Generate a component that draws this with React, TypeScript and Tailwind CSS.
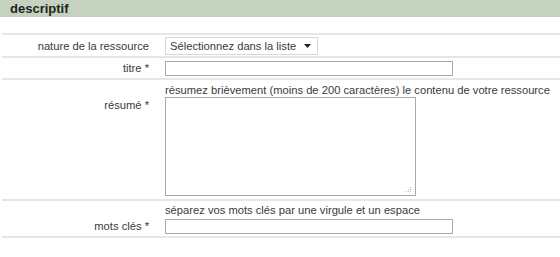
function Row({
  label,
  labelClass,
  children,
  className,
}: {
  label: string;
  labelClass?: string;
  children: React.ReactNode;
  className?: string;
}) {
  return (
    <div className={`flex border-b-2 border-[#e6e6e6] ${className ?? ""}`}>
      <div className={`w-[147px] shrink-0 text-right ${labelClass ?? ""}`}>{label}</div>
      <div className="ml-[16px] flex-1">{children}</div>
    </div>
  );
}

export default function App() {
  return (
    <div className="w-[560px] h-[257px] overflow-hidden bg-white text-[11.2px] leading-[14px] text-[#3a3a3a] whitespace-nowrap font-['Liberation_Sans',Arial,sans-serif]">
      <div className="h-[17px] bg-[#c6d2c0] pl-[10px] pt-[2px] text-[13px] leading-[14px] font-bold text-[#222]">
        descriptif
      </div>
      <div className="ml-[2px]">
        <div className="h-[18px] border-b-2 border-[#e6e6e6]" />
        <Row label="nature de la ressource" className="h-[23px] items-center">
          <div className="flex h-[18px] w-[153px] items-center justify-between border border-[#d8d8d8] bg-white pl-[4px] pr-[6px]">
            <span>Sélectionnez dans la liste</span>
            <svg width="7" height="4" viewBox="0 0 7 4">
              <path d="M0 0h7L3.5 4z" fill="#222" />
            </svg>
          </div>
        </Row>
        <Row label="titre *" className="h-[22px] items-center">
          <div className="h-[15px] w-[288px] border border-[#a9a9a9] bg-white" />
        </Row>
        <Row label="résumé *" labelClass="pt-[15px]" className="h-[121px] pt-[3px]">
          <div>résumez brièvement (moins de 200 caractères) le contenu de votre ressource</div>
          <div className="relative h-[99px] w-[251px] border border-[#a9a9a9] bg-white">
            <div className="absolute bottom-[3px] right-[4px] grid grid-cols-3 gap-[1px]">
              <span className="h-[1px] w-[1px]" />
              <span className="h-[1px] w-[1px]" />
              <span className="h-[1px] w-[1px] bg-[#bbb]" />
              <span className="h-[1px] w-[1px]" />
              <span className="h-[1px] w-[1px] bg-[#bbb]" />
              <span className="h-[1px] w-[1px] bg-[#bbb]" />
              <span className="h-[1px] w-[1px] bg-[#bbb]" />
              <span className="h-[1px] w-[1px] bg-[#bbb]" />
              <span className="h-[1px] w-[1px] bg-[#bbb]" />
            </div>
          </div>
        </Row>
        <Row label="mots clés *" labelClass="pt-[16px]" className="h-[37px] pt-[2px]">
          <div>séparez vos mots clés par une virgule et un espace</div>
          <div className="mt-[2px] h-[15px] w-[288px] border border-[#a9a9a9] bg-white" />
        </Row>
      </div>
    </div>
  );
}
